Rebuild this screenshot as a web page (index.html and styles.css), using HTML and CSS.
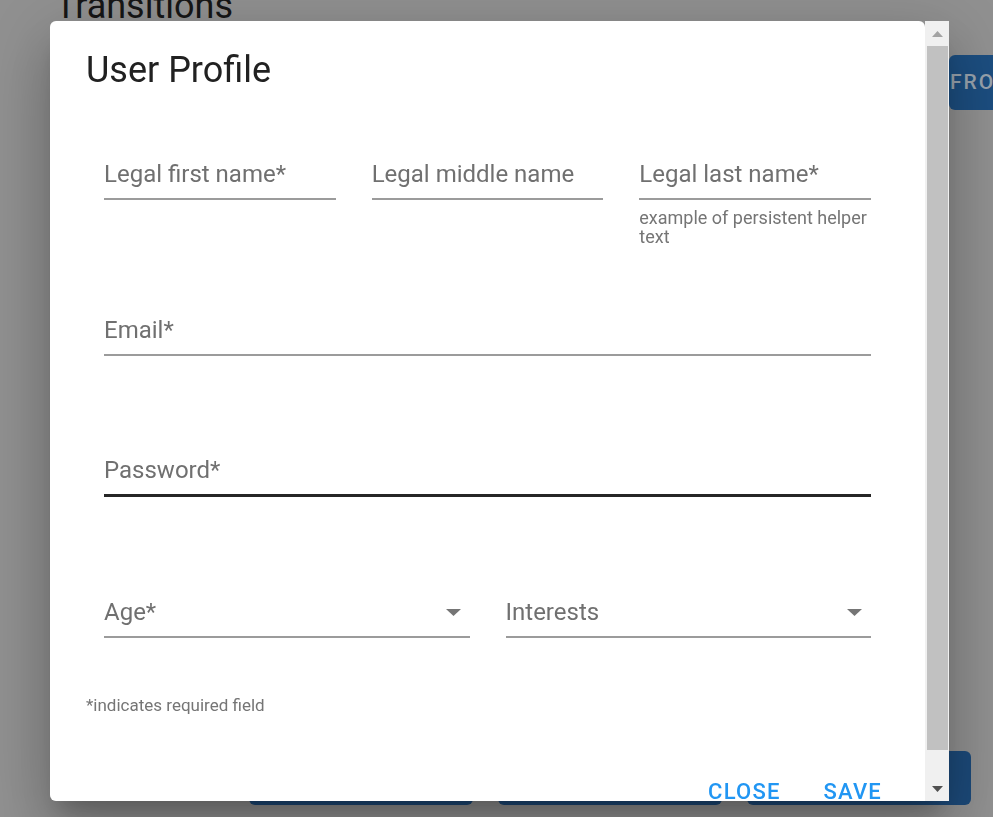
FILE: index.html
```html
<!DOCTYPE html>
<html lang="en">
<head>
<meta charset="utf-8">
<title>User Profile</title>
<link rel="stylesheet" href="styles.css">
</head>
<body>
<div class="page">
  <h1 class="page-title">Transitions</h1>
  <div class="btn-row btn-row-top">
    <span class="pbtn"></span>
    <span class="pbtn"></span>
    <span class="pbtn"></span>
    <span class="pbtn pbtn-right">FROM RIGHT</span>
  </div>
  <div class="btn-row btn-row-bottom">
    <span class="pbtn pbtn-b"></span>
    <span class="pbtn pbtn-b"></span>
    <span class="pbtn pbtn-b"></span>
  </div>
</div>

<div class="backdrop">
  <div class="dialog">
    <div class="dialog-body">
      <h2 class="dialog-title">User Profile</h2>

      <div class="row row-names">
        <div class="cell cell-third">
          <div class="field"><span class="label">Legal first name*</span></div>
        </div>
        <div class="cell cell-third">
          <div class="field"><span class="label">Legal middle name</span></div>
        </div>
        <div class="cell cell-third">
          <div class="field"><span class="label">Legal last name*</span></div>
          <p class="helper">example of persistent helper text</p>
        </div>
      </div>

      <div class="row row-email">
        <div class="cell cell-full">
          <div class="field"><span class="label">Email*</span></div>
        </div>
      </div>

      <div class="row row-password">
        <div class="cell cell-full">
          <div class="field field-hover"><span class="label">Password*</span></div>
        </div>
      </div>

      <div class="row row-selects">
        <div class="cell cell-half">
          <div class="field">
            <span class="label">Age*</span>
            <svg class="caret" width="15" height="7" viewBox="0 0 15 7"><path d="M0 0h15L7.5 7z" fill="#757575"/></svg>
          </div>
        </div>
        <div class="cell cell-half">
          <div class="field">
            <span class="label">Interests</span>
            <svg class="caret" width="15" height="7" viewBox="0 0 15 7"><path d="M0 0h15L7.5 7z" fill="#757575"/></svg>
          </div>
        </div>
      </div>

      <p class="required-note">*indicates required field</p>

      <div class="actions">
        <span class="action">CLOSE</span>
        <span class="action">SAVE</span>
      </div>
    </div>
    <div class="scrollbar">
      <div class="sb-btn">
        <svg width="11" height="6" viewBox="0 0 11 6"><path d="M5.5 0L11 6H0z" fill="#a3a3a3"/></svg>
      </div>
      <div class="sb-track"><div class="sb-thumb"></div></div>
      <div class="sb-btn">
        <svg width="11" height="6" viewBox="0 0 11 6"><path d="M0 0h11L5.5 6z" fill="#505050"/></svg>
      </div>
    </div>
  </div>
</div>
</body>
</html>
```

FILE: styles.css
```css
html, body {
  margin: 0;
  padding: 0;
  height: 100%;
}

body {
  background: #919191;
  font-family: Roboto, "Liberation Sans", Arial, sans-serif;
  overflow: hidden;
}

/* ---------- page behind the dialog ---------- */
.page {
  display: flex;
  flex-direction: column;
}

.page-title {
  margin: -14px 0 0 55px;
  font-size: 36px;
  line-height: 40px;
  font-weight: 400;
  color: #161616;
  white-space: nowrap;
}

.btn-row {
  display: flex;
  white-space: nowrap;
}

.btn-row-top {
  margin-top: 29px;
  padding-left: 55px;
  gap: 23px;
}

.btn-row-bottom {
  margin-top: 641px;
  padding-left: 249px;
  gap: 25px;
}

.pbtn {
  flex: none;
  box-sizing: border-box;
  width: 275px;
  height: 55px;
  border-radius: 6px;
  background: #1c4e80;
  color: #9aa4ae;
  font-size: 21px;
  font-weight: 500;
  letter-spacing: 2px;
  line-height: 55px;
  padding-left: 26px;
}

.pbtn-right {
  width: 300px;
  padding-left: 1px;
}

.pbtn-b {
  width: 224px;
  height: 54px;
  background: #1c4a7a;
}

/* ---------- dialog ---------- */
.backdrop {
  position: fixed;
  inset: 0;
  padding: 21px 0 0 50px;
}

.dialog {
  display: flex;
  width: 899px;
  height: 780px;
  border-radius: 6px 0 0 6px;
  box-shadow:
    0 17px 22px -10px rgba(0, 0, 0, 0.22),
    0 36px 56px 4px rgba(0, 0, 0, 0.15),
    0 13px 68px 12px rgba(0, 0, 0, 0.13);
}

.dialog-body {
  flex: 1;
  min-width: 0;
  background: #fff;
  border-radius: 6px 6px 0 6px;
  overflow: hidden;
  padding: 30px 36px 0;
}

.dialog-title {
  margin: 0;
  font-size: 36px;
  line-height: 38px;
  font-weight: 400;
  color: #212121;
}

.row {
  display: flex;
}

.row-names { margin-top: 71px; }
.row-email { margin-top: 70px; }
.row-password { margin-top: 100px; }
.row-selects { margin-top: 101px; }

.cell {
  box-sizing: border-box;
  padding: 0 18px;
}

.cell-third { width: 33.3333%; }
.cell-half { width: 50%; }
.cell-full { width: 100%; }

.field {
  display: flex;
  align-items: center;
  padding-bottom: 10px;
  border-bottom: 2px solid #9b9b9b;
}

.field-hover {
  border-bottom: 3px solid #262626;
}

.label {
  flex: 1;
  font-size: 24px;
  line-height: 28px;
  color: #707070;
  white-space: nowrap;
}

.caret {
  flex: none;
  margin-right: 9px;
}

.helper {
  margin: 8px 0 0;
  font-size: 18px;
  line-height: 19px;
  color: #757575;
}

.required-note {
  margin: 57px 0 0;
  font-size: 17px;
  line-height: 20px;
  color: #757575;
}

.actions {
  display: flex;
  justify-content: flex-end;
  gap: 43px;
  margin-top: 64px;
  padding: 0 7px 20px 0;
}

.action {
  font-size: 22px;
  line-height: 26px;
  font-weight: 500;
  letter-spacing: 1.2px;
  color: #2196f3;
}

/* ---------- scrollbar ---------- */
.scrollbar {
  flex: none;
  width: 24px;
  display: flex;
  flex-direction: column;
  background: #f0f0f0;
}

.sb-btn {
  flex: none;
  height: 25px;
  display: flex;
  align-items: center;
  justify-content: center;
}

.sb-track {
  flex: 1;
  padding: 0 1px 0 2px;
}

.sb-thumb {
  height: 704px;
  background: #c1c1c1;
}
```
